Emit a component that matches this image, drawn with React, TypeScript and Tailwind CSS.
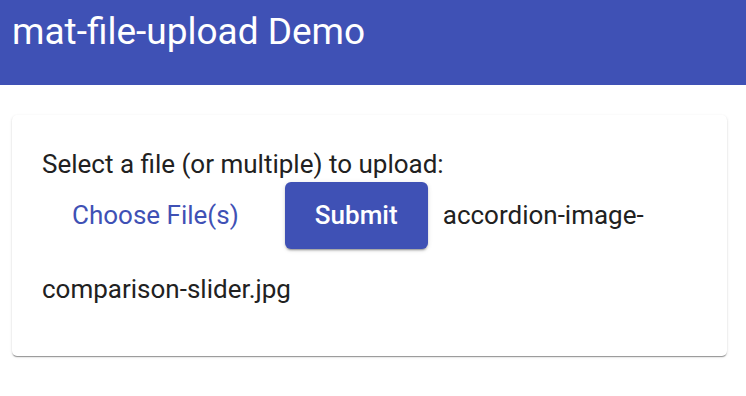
export default function App() {
  return (
    <div className="w-[746px] h-[396px] bg-white" style={{ fontFamily: 'Roboto, "Noto Sans", sans-serif' }}>
      <div className="h-[85px] bg-[#3f51b5] px-[12px] pt-[10px]">
        <h1 className="text-[37px] leading-[44px] font-normal text-white">mat-file-upload Demo</h1>
      </div>
      <div className="mt-[30px] ml-[12px] w-[715px] rounded-[5px] bg-white pl-[30px] pr-[30px] pt-[36px] pb-[30px] shadow-[0_2px_1px_-1px_rgba(0,0,0,0.25),0_1px_1px_0_rgba(0,0,0,0.16),0_1px_3px_0_rgba(0,0,0,0.12)] text-[#212121]">
        <div className="text-[26px] leading-[27px]">Select a file (or multiple) to upload:</div>
        <div className="text-[26px] leading-[74px]">
          <button className="inline-block h-[67px] px-[30px] mr-[16px] text-[#3f51b5] font-normal leading-[67px] align-baseline">Choose File(s)</button>
          <button className="inline-block h-[67px] w-[143px] mr-[15px] rounded-[6px] bg-[#3f51b5] text-white font-medium leading-[67px] align-baseline shadow-[0_3px_1px_-2px_rgba(0,0,0,0.2),0_2px_2px_0_rgba(0,0,0,0.14),0_1px_5px_0_rgba(0,0,0,0.12)]">Submit</button>
          <span>accordion-image-comparison-slider.jpg</span>
        </div>
      </div>
    </div>
  );
}
